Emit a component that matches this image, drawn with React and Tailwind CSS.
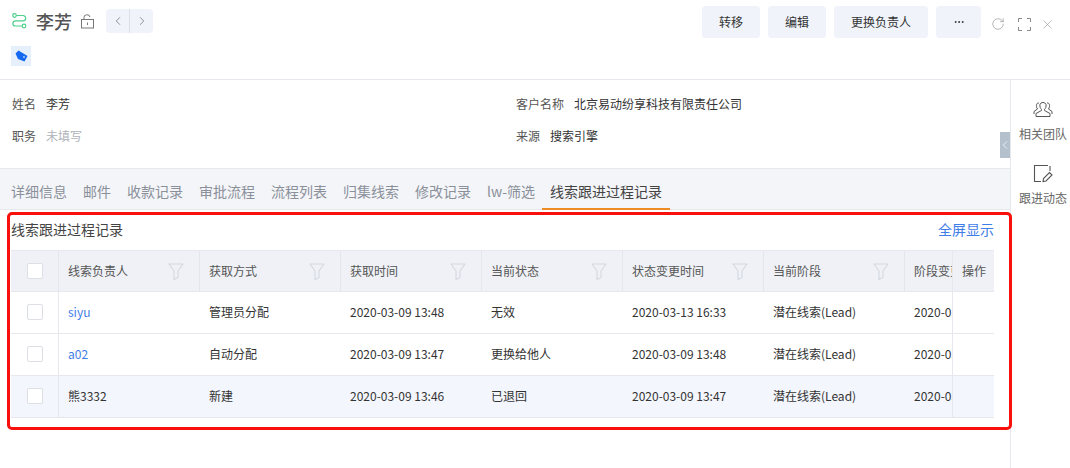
import { ChevronLeft, ChevronRight, Ellipsis, RotateCw, X } from "lucide-react";

const FONT = "font-['Noto_Sans_CJK_SC','Liberation_Sans',sans-serif]";

const columns = ["线索负责人", "获取方式", "获取时间", "当前状态", "状态变更时间", "当前阶段"];

const rows = [
  { owner: "siyu", link: true, way: "管理员分配", time: "2020-03-09 13:48", status: "无效", changed: "2020-03-13 16:33" },
  { owner: "a02", link: true, way: "自动分配", time: "2020-03-09 13:47", status: "更换给他人", changed: "2020-03-09 13:48" },
  { owner: "熊3332", way: "新建", time: "2020-03-09 13:46", status: "已退回", changed: "2020-03-09 13:47", active: true },
];

const tabs = ["详细信息", "邮件", "收款记录", "审批流程", "流程列表", "归集线索", "修改记录", "lw-筛选"];

function FilterIcon() {
  return (
    <svg width="16" height="17" viewBox="0 0 16 17" fill="none" stroke="#d3d8e0" strokeWidth="1.1">
      <path d="M1 1h14L10 8v6.500l-4 2V8z" strokeLinejoin="round" />
    </svg>
  );
}

function Checkbox() {
  return <div className="w-4 h-4 bg-white border border-[#dcdfe4] rounded-[2px]" />;
}

function HeaderButton({ children, className }) {
  return (
    <button className={`h-8 rounded bg-[#f0f3fa] text-[12px] text-[#333] flex items-center justify-center ${className}`}>
      {children}
    </button>
  );
}

function Header() {
  return (
    <div className="h-20 border-b border-[#e6e8ee] pl-3 pr-[15px] relative shrink-0">
      <div className="flex items-start justify-between pt-[6px]">
        <div className="flex items-center h-8 -mt-[1px]">
          <svg width="15" height="16" viewBox="0 0 15 16" fill="none" stroke="#4fd08d" strokeWidth="1.2">
            <circle cx="2.5" cy="2.500" r="1.800" />
            <circle cx="12" cy="13" r="1.800" />
            <path d="M4.500 2.500h6.500a2.600 2.600 0 0 1 0 5.300H3.500a2.600 2.600 0 0 0 0 5.200h6.500" />
          </svg>
          <span className="ml-[9px] text-[18px] text-[#555] font-medium">李芳</span>
          <svg className="ml-[8px]" width="15" height="15" viewBox="0 0 15 15" fill="none" stroke="#777" strokeWidth="1">
            <rect x="1.500" y="5.500" width="12" height="8.500" />
            <path d="M4 5.500V3.500a3 2.500 0 0 1 6-.5M7.500 8.500v2.500" />
          </svg>
          <div className="ml-[11px] flex h-6 w-[47px] rounded bg-[#f0f3fa] text-[#666]">
            <div className="flex-1 flex items-center justify-center border-r border-[#dde0e6]">
              <ChevronLeft size={14} strokeWidth={1.2} />
            </div>
            <div className="flex-1 flex items-center justify-center">
              <ChevronRight size={14} strokeWidth={1.2} />
            </div>
          </div>
        </div>
        <div className="flex items-center">
          <HeaderButton className="w-[58px]">转移</HeaderButton>
          <HeaderButton className="w-[58px] ml-2">编辑</HeaderButton>
          <HeaderButton className="w-[94px] ml-2">更换负责人</HeaderButton>
          <HeaderButton className="w-[45px] ml-2">
            <Ellipsis size={12} />
          </HeaderButton>
          <RotateCw className="ml-[10px] mt-[4px] text-[#999]" size={14} strokeWidth={1.2} />
          <svg className="ml-[13px] mt-[4px]" width="13" height="13" viewBox="0 0 13 13" fill="none" stroke="#888" strokeWidth="1">
            <path d="M4 .5H.5V4M9 .5h3.500V4M.5 9v3.500H4M12.500 9v3.500H9" />
          </svg>
          <X className="ml-[9px] mt-[4px] text-[#999]" size={15} strokeWidth={1} />
        </div>
      </div>
      <div className="absolute left-[11px] top-[46px] w-5 h-5 bg-[#e6f0fd] flex items-center justify-center">
        <svg width="13" height="12" viewBox="0 0 13 12">
          <path d="M0.500 3.500 3.500 0.500 12.500 6 9.500 11.500 3 9z" fill="#1469f0" />
          <circle cx="9" cy="7" r="0.900" fill="#bcd6fb" />
        </svg>
      </div>
    </div>
  );
}

function Info() {
  return (
    <div className="h-[88px] grid grid-cols-[504px_1fr] grid-rows-[32px_32px] pl-3 pt-2 text-[12px] text-[#333] shrink-0 relative">
      <div className="flex items-center">
        <span className="w-[34px] text-[#555]">姓名</span>
        <span>李芳</span>
      </div>
      <div className="flex items-center">
        <span className="w-[58px] text-[#555]">客户名称</span>
        <span>北京易动纷享科技有限责任公司</span>
      </div>
      <div className="flex items-center">
        <span className="w-[34px] text-[#555]">职务</span>
        <span className="text-[#aeb2b9]">未填写</span>
      </div>
      <div className="flex items-center">
        <span className="w-[34px] text-[#555]">来源</span>
        <span>搜索引擎</span>
      </div>
      <div className="absolute right-0 top-[52px] w-[10px] h-[26px] bg-[#b4c1cd] flex items-center justify-center">
        <ChevronLeft className="text-white shrink-0" size={14} strokeWidth={1.2} />
      </div>
    </div>
  );
}

function Tabs() {
  return (
    <div className="h-[42px] bg-[#f4f5f9] border-t border-b border-[#e6e8ee] pl-[11px] flex gap-4 text-[14px] text-[#8a9099] shrink-0">
      {tabs.map((t) => (
        <div key={t} className="pt-[13px] leading-[18px]">{t}</div>
      ))}
      <div className="h-[41px] -ml-[9px] px-[8px] pt-[13px] leading-[18px] text-[#444] border-b-2 border-[#f08a24]">
        线索跟进过程记录
      </div>
    </div>
  );
}

function Table() {
  return (
    <div className="ml-[11px] mr-4 overflow-hidden relative border-b border-[#e6e8ee] text-[12px]">
      <div className="flex h-[41px] bg-[#eff1f6] border-t border-[#e6e8ee] text-[#555]">
        <div className="w-[48px] shrink-0 border-r border-[#e3e6ed] flex items-center justify-center">
          <Checkbox />
        </div>
        {columns.map((c) => (
          <div key={c} className="w-[141px] shrink-0 border-r border-[#e3e6ed] pl-[9px] pr-[15px] flex items-center justify-between">
            <span>{c}</span>
            <FilterIcon />
          </div>
        ))}
        <div className="w-[141px] shrink-0 pl-[9px] flex items-center">阶段变更时间</div>
      </div>
      {rows.map((r) => (
        <div key={r.owner} className={`flex h-[42px] border-t border-[#e6e8ee] text-[#333] ${r.active ? "bg-[#f3f6fd]" : "bg-white"}`}>
          <div className="w-[48px] shrink-0 border-r border-[#e6e8ee] flex items-center justify-center pb-[2px]">
            <Checkbox />
          </div>
          <div className={`w-[141px] shrink-0 pl-[9px] pb-[2px] flex items-center ${r.link ? "text-[#3f7de8]" : ""}`}>{r.owner}</div>
          <div className="w-[141px] shrink-0 pl-[9px] pb-[2px] flex items-center">{r.way}</div>
          <div className="w-[141px] shrink-0 pl-[9px] pb-[2px] flex items-center">{r.time}</div>
          <div className="w-[141px] shrink-0 pl-[9px] pb-[2px] flex items-center">{r.status}</div>
          <div className="w-[141px] shrink-0 pl-[9px] pb-[2px] flex items-center">{r.changed}</div>
          <div className="w-[141px] shrink-0 pl-[9px] pb-[2px] flex items-center">潜在线索(Lead)</div>
          <div className="w-[141px] shrink-0 pl-[9px] pb-[2px] flex items-center">2020-03-09 13:48</div>
        </div>
      ))}
      {/* fixed operations column */}
      <div className="absolute right-0 top-0 bottom-0 w-[42px] border-l border-[#e6e8ee]">
        <div className="h-[41px] bg-[#eff1f6] border-t border-[#e6e8ee] pl-[9px] flex items-center text-[#555]">操作</div>
        {rows.map((r) => (
          <div key={r.owner} className={`h-[42px] border-t border-[#e6e8ee] ${r.active ? "bg-[#f3f6fd]" : "bg-white"}`} />
        ))}
      </div>
    </div>
  );
}

function SideBar() {
  return (
    <div className="flex-1 border-l border-[#e6e8ee] flex flex-col items-center pl-[5px] pt-[22px] text-[12px] text-[#666]">
      <svg width="20" height="16" viewBox="0 0 20 16" fill="none" stroke="#555" strokeWidth="1">
        <path d="M7 2.500a3.200 3.200 0 0 1 6 0c.5 2-.5 4-1.500 5v1l5.500 3v3H3v-3l5.500-3v-1C7.500 6.500 6.500 4.500 7 2.500z" />
        <path d="M14 1c2.500-.5 3.500 3 1.500 6l3.500 2.500v2.500M6 1c-2.500-.5-3.500 3-1.500 6L1 9.500v2.500" />
      </svg>
      <span className="mt-[7px] leading-[18px]">相关团队</span>
      <svg className="mt-[21px]" width="20" height="20" viewBox="0 0 20 20" fill="none" stroke="#555" strokeWidth="1.1">
        <path d="M15 1.500H1.500v16H8M17 2v5" />
        <path d="M10 17.500l.5-3 6-6 2.500 2.500-6 6z" />
      </svg>
      <span className="mt-[5px] leading-[18px]">跟进动态</span>
    </div>
  );
}

export default function App() {
  return (
    <div className={`w-[1070px] h-[468px] bg-white flex flex-col overflow-hidden relative ${FONT}`}>
      <Header />
      <div className="flex flex-1 min-h-0">
        <div className="w-[1010px] shrink-0 flex flex-col">
          <Info />
          <Tabs />
          <div className="flex items-center justify-between h-10 pl-[11px] pr-4 pb-[2px] text-[14px] shrink-0">
            <span className="text-[#444]">线索跟进过程记录</span>
            <span className="text-[#3f7de8]">全屏显示</span>
          </div>
          <Table />
        </div>
        <SideBar />
      </div>
      {/* red annotation frame drawn over the screenshot */}
      <div className="absolute left-[7px] top-[212px] w-[1005px] h-[218px] border-[3px] border-[#f8100c] rounded-[5px]" />
    </div>
  );
}
